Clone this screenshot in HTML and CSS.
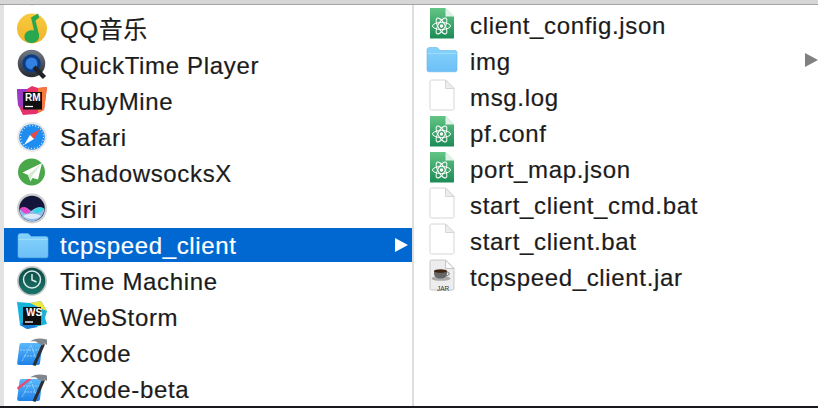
FILE: index.html
```html
<!DOCTYPE html>
<html lang="en">
<head>
<meta charset="utf-8">
<title>Finder columns</title>
<link rel="stylesheet" href="styles.css">
</head>
<body>
<svg class="defs" width="0" height="0" aria-hidden="true">
  <defs>
    <linearGradient id="folderGrad" x1="0" y1="0" x2="0" y2="1"><stop offset="0" stop-color="#86d2fb"/><stop offset="1" stop-color="#6cc0f7"/></linearGradient>
    <linearGradient id="atomGrad" x1="0" y1="0" x2="0" y2="1"><stop offset="0" stop-color="#63c585"/><stop offset="1" stop-color="#1c8c55"/></linearGradient>
    <linearGradient id="xcodeGrad" x1="0" y1="0" x2="0" y2="1"><stop offset="0" stop-color="#5ab8f9"/><stop offset="1" stop-color="#1f82ea"/></linearGradient>
    <linearGradient id="qtRing" x1="0" y1="0" x2="0" y2="1"><stop offset="0" stop-color="#6a7480"/><stop offset="1" stop-color="#2c3036"/></linearGradient>
    <linearGradient id="qqGrad" x1="0" y1="0" x2="0" y2="1"><stop offset="0" stop-color="#f8ca3e"/><stop offset="1" stop-color="#f0b429"/></linearGradient>
    <linearGradient id="tmGrad" x1="0" y1="0" x2="0" y2="1"><stop offset="0" stop-color="#0e4a46"/><stop offset="1" stop-color="#1a7468"/></linearGradient>
    <symbol id="folder" viewBox="0 0 32 32">
      <path d="M1 7C1 5.500 2 4.500 3.500 4.500H10c1.500 0 2 .6 3 1.800L14 7.500H29c1.200 0 2 .8 2 2V27c0 1-.8 1.800-1.800 1.800H2.800C1.800 28.800 1 28 1 27Z" fill="url(#folderGrad)" stroke="#66b4ea" stroke-width=".6"/>
      <path d="M1.300 10.500H30.700" stroke="#a6e0fc" stroke-width=".8"/>
    </symbol>
    <symbol id="blank" viewBox="0 0 32 32">
      <path d="M5.500 1H19.500L28 9.500V29.500C28 30.400 27.300 31 26.500 31H5.500C4.700 31 4 30.400 4 29.500V2.500C4 1.700 4.700 1 5.500 1Z" fill="#fff" stroke="#d6d6d6"/>
      <path d="M19.500 1V9.500H28Z" fill="#ededed" stroke="#d6d6d6"/>
    </symbol>
    <symbol id="atom" viewBox="0 0 32 32">
      <path d="M4 1H19.500L28 9.500V31.500H4Z" fill="url(#atomGrad)"/>
      <path d="M19.500 1V9.500H28Z" fill="#dff2e5"/>
      <g fill="none" stroke="#fff" stroke-width="1">
        <ellipse cx="15.500" cy="19" rx="9" ry="3.500" transform="rotate(60 15.500 19)"/>
        <ellipse cx="15.500" cy="19" rx="9" ry="3.500" transform="rotate(-60 15.500 19)"/>
        <ellipse cx="15.500" cy="19" rx="9" ry="3.500"/>
      </g>
      <circle cx="15.500" cy="19" r="1.700" fill="#fff"/>
    </symbol>
    <symbol id="jar" viewBox="0 0 32 32">
      <path d="M5.500 1H19.500L28 9.500V29.500C28 30.400 27.300 31 26.500 31H5.500C4.700 31 4 30.400 4 29.500V2.500C4 1.700 4.700 1 5.500 1Z" fill="#ededed" stroke="#c6c6c6"/>
      <path d="M19.500 1V9.500H28Z" fill="#fafafa" stroke="#c6c6c6"/>
      <ellipse cx="15" cy="19.500" rx="9.500" ry="2.300" fill="#aaaaaa"/>
      <path d="M8 12H21V14.500C21 17.500 18.500 19.500 14.500 19.500S8 17.500 8 14.500Z" fill="#666"/>
      <ellipse cx="14.500" cy="12" rx="6.500" ry="1.800" fill="#3f2513"/>
      <path d="M21 13c3 0 3 3.500-.8 4" fill="none" stroke="#666"/>
    </symbol>
    <symbol id="peek" viewBox="0 0 32 32">
      <ellipse cx="15" cy="16" rx="7" ry="15.500" fill="#ecd9a8"/>
    </symbol>
    <symbol id="qq" viewBox="0 0 32 32">
      <circle cx="15" cy="15.500" r="15" fill="url(#qqGrad)"/>
      <path d="M14 4.500L21 .5 22.300 4.500 18.500 7.500 22 21.500C23 26.500 19 30 14.500 30 10 30 7 27 7.500 23 8 18.500 13 16.300 17 17.500Z" fill="#28a74f"/>
    </symbol>
    <symbol id="quicktime" viewBox="0 0 32 32">
      <circle cx="14.500" cy="14.500" r="11.500" fill="#0d3c86" stroke="url(#qtRing)" stroke-width="4.500"/>
      <circle cx="14.500" cy="14.500" r="6" fill="#3480e0"/>
      <path d="M17 18L27.500 28.500" stroke="#1f2226" stroke-width="4.500"/>
    </symbol>
    <symbol id="rubymine" viewBox="0 0 32 32">
      <path d="M0 4L10 4 15 1 21 3 30 2 27 25 19 29 6 30 1 20Z" fill="#e5326b"/>
      <path d="M0 4L10 4 5 24 1 20Z" fill="#9a3ac4"/>
      <path d="M21 3L30 2 27 25 21 28Z" fill="#f5793a"/>
      <rect x="6" y="7" width="19" height="17.500" fill="#0f0f0f"/>
      <path d="M8 21.500h8" stroke="#fff" stroke-width="1.300"/>
    </symbol>
    <symbol id="safari" viewBox="0 0 32 32">
      <circle cx="15" cy="16" r="15" fill="#e8e8e8"/>
      <circle cx="15" cy="16" r="12.800" fill="#1f8df0"/>
      <circle cx="15" cy="16" r="11.500" fill="none" stroke="#d5ebfb" stroke-width="1.200" stroke-dasharray="1 2"/>
      <path d="M23 8L17 18 13 14Z" fill="#f0483e"/>
      <path d="M7 24L13 14 17 18Z" fill="#fff"/>
    </symbol>
    <symbol id="shadowsocks" viewBox="0 0 32 32">
      <circle cx="14.500" cy="15" r="13.500" fill="#4aa84b"/>
      <path d="M25 6L5.500 15.500 11 18 13.500 24.500 15.500 21 21 22.500Z" fill="#fff"/>
      <path d="M25 6L11 18 13.500 24.500 14.500 19.500Z" fill="#d3e9d3"/>
    </symbol>
    <symbol id="siri" viewBox="0 0 32 32">
      <circle cx="15" cy="15.500" r="15" fill="#cdcdcd"/>
      <circle cx="15" cy="15.500" r="12.800" fill="#15143a"/>
      <path d="M2.500 17C7 13 10.500 15 14 18 19 14 23 13 27.500 16 27 23 21 28.300 15 28.300S3.500 24 2.500 17Z" fill="#8fbcee"/>
      <path d="M3 15.500C7 12.500 11 14.500 13.500 19 10 22 6 21 3 15.500Z" fill="#e346c6"/>
      <path d="M16 18C20 14 24 13 27 15.500 24 20 19 22 16 18Z" fill="#38d3e0"/>
      <path d="M6 23C10 20 20 20 24 23 20 27 10 27 6 23Z" fill="#dbe9fb"/>
    </symbol>
    <symbol id="timemachine" viewBox="0 0 32 32">
      <circle cx="15" cy="16" r="15" fill="#c4c8c8"/>
      <circle cx="15" cy="16" r="13.300" fill="url(#tmGrad)"/>
      <circle cx="15" cy="14.500" r="8.500" fill="none" stroke="#d6ede8" stroke-width="1.500"/>
      <path d="M15 9V15L19.500 17" fill="none" stroke="#d6ede8" stroke-width="1.500"/>
    </symbol>
    <symbol id="webstorm" viewBox="0 0 32 32">
      <path d="M0 1L13 2 24 0 30 10 28 17 30 23 10 28 3 24Z" fill="#17b3d9"/>
      <path d="M13 2L24 0 30 10 23 7Z" fill="#eee541"/>
      <path d="M3 24L10 28 21 26 8 19Z" fill="#1d7fd6"/>
      <rect x="6" y="6" width="18" height="18" fill="#0f0f0f"/>
      <path d="M8 21h8" stroke="#fff" stroke-width="1.300"/>
    </symbol>
    <symbol id="xcode" viewBox="0 0 32 32">
      <path d="M4.500 6H23C24.500 6 25.500 7 25.300 8.500L23 26C22.800 27.500 22 28 20.500 28H2C.7 28 0 27 .2 25.800L2.500 7.800C2.700 6.700 3.400 6 4.500 6Z" fill="url(#xcodeGrad)"/>
      <path d="M5 24L14 8M14 8L20 24M7 19H20M3 13H22" fill="none" stroke="#a9d8fa" stroke-width=".8" stroke-dasharray="2 1"/>
      <path d="M25 6.500L28 7.500 18.500 29 15.500 28Z" fill="#2b2f33"/>
      <path d="M13 4.500C18 .5 24 1 30 2.500L30 8 27 6.500 26 8.500 21.500 6.500 19 4.500C18 4 15 4 13 4.500Z" fill="#81878d"/>
    </symbol>
    <symbol id="xcodebeta" viewBox="0 0 32 32">
      <use href="#xcode"/>
      <path d="M0 14.500L11 6 14.500 6 1 17Z" fill="#ea4a72"/>
    </symbol>
  </defs>
</svg>
<div class="shot">
  <div class="top-bar"></div>
  <div class="columns">
    <div class="edge"></div>
    <ul class="col col-apps">
      <li class="row row-peek"><svg class="icon"><use href="#peek"/></svg></li>
      <li class="row"><svg class="icon"><use href="#qq"/></svg><span class="name">QQ音乐</span></li>
      <li class="row"><svg class="icon"><use href="#quicktime"/></svg><span class="name">QuickTime Player</span></li>
      <li class="row"><svg class="icon"><use href="#rubymine"/></svg><span class="name">RubyMine</span><span class="badge badge-rm">RM</span></li>
      <li class="row"><svg class="icon"><use href="#safari"/></svg><span class="name">Safari</span></li>
      <li class="row"><svg class="icon"><use href="#shadowsocks"/></svg><span class="name">ShadowsocksX</span></li>
      <li class="row"><svg class="icon"><use href="#siri"/></svg><span class="name">Siri</span></li>
      <li class="row selected"><svg class="icon"><use href="#folder"/></svg><span class="name">tcpspeed_client</span><span class="arrow arrow-white"></span></li>
      <li class="row"><svg class="icon"><use href="#timemachine"/></svg><span class="name">Time Machine</span></li>
      <li class="row"><svg class="icon"><use href="#webstorm"/></svg><span class="name">WebStorm</span><span class="badge badge-ws">WS</span></li>
      <li class="row"><svg class="icon"><use href="#xcode"/></svg><span class="name">Xcode</span></li>
      <li class="row"><svg class="icon"><use href="#xcodebeta"/></svg><span class="name">Xcode-beta</span></li>
    </ul>
    <div class="divider"></div>
    <ul class="col col-files">
      <li class="row"><svg class="icon file"><use href="#atom"/></svg><span class="name">client_config.json</span></li>
      <li class="row"><svg class="icon file"><use href="#folder"/></svg><span class="name">img</span><span class="arrow arrow-gray"></span></li>
      <li class="row"><svg class="icon file"><use href="#blank"/></svg><span class="name">msg.log</span></li>
      <li class="row"><svg class="icon file"><use href="#atom"/></svg><span class="name">pf.conf</span></li>
      <li class="row"><svg class="icon file"><use href="#atom"/></svg><span class="name">port_map.json</span></li>
      <li class="row"><svg class="icon file"><use href="#blank"/></svg><span class="name">start_client_cmd.bat</span></li>
      <li class="row"><svg class="icon file"><use href="#blank"/></svg><span class="name">start_client.bat</span></li>
      <li class="row"><svg class="icon file"><use href="#jar"/></svg><span class="name">tcpspeed_client.jar</span><span class="badge badge-jar">JAR</span></li>
    </ul>
  </div>
  <div class="bottom-bar"></div>
</div>
</body>
</html>
```
FILE: styles.css
```css
* { box-sizing: border-box; }
html, body { margin: 0; padding: 0; }
body { width: 818px; height: 408px; overflow: hidden; background: #fff; }
.defs { position: absolute; }
.shot { width: 818px; height: 408px; display: flex; flex-direction: column; font-family: "Liberation Sans", "Noto Sans CJK SC", Arial, sans-serif; color: #1c1c1c; }
.top-bar { height: 5px; flex: none; background: #d6d6d6; border-bottom: 1px solid #a3a3a3; }
.bottom-bar { height: 2px; flex: none; background: #17191d; }
.columns { flex: 1; min-height: 0; display: flex; overflow: hidden; }
.edge { width: 4px; flex: none; background: #e2e2e2; }
.divider { width: 2px; flex: none; background: #dedede; }
.col { list-style: none; margin: 0; display: flex; flex-direction: column; gap: 2px; }
.col-apps { width: 408px; flex: none; padding: 7px 0 0; }
.col-files { flex: 1; padding: 4px 0 0; }
.row { height: 34px; flex: none; display: flex; align-items: center; position: relative; font-size: 24px; }
.row-peek { margin-top: -36px; }
.row-peek .icon { margin-bottom: 6px; }
.col-apps .row { padding-left: 13px; }
.col-files .row { padding-left: 12px; }
.icon { width: 32px; height: 32px; flex: none; }
.file { margin-bottom: 6px; }
.name { margin-left: 11px; white-space: nowrap; line-height: 30px; letter-spacing: .66px; -webkit-text-stroke: .2px currentColor; }
.col-apps .name { margin-top: 2px; }
.col-files .name { margin-left: 12px; }
.selected { background: #0068d0; color: #fff; }
.arrow { position: absolute; top: 50%; width: 0; height: 0; margin-top: -7px; border-style: solid; border-width: 7px 0 7px 13px; border-color: transparent; }
.arrow-white { right: 4px; border-left-color: #fff; }
.arrow-gray { right: 0; margin-top: -9px; border-left-color: #808080; }
.badge { position: absolute; font-weight: bold; color: #fff; line-height: 10px; font-size: 10px; }
.badge-rm { left: 21px; top: 9px; }
.badge-ws { left: 22px; top: 8px; }
.badge-jar { left: 23px; top: 24px; font-size: 6.5px; line-height: 7px; color: #333; font-weight: normal; }
```
